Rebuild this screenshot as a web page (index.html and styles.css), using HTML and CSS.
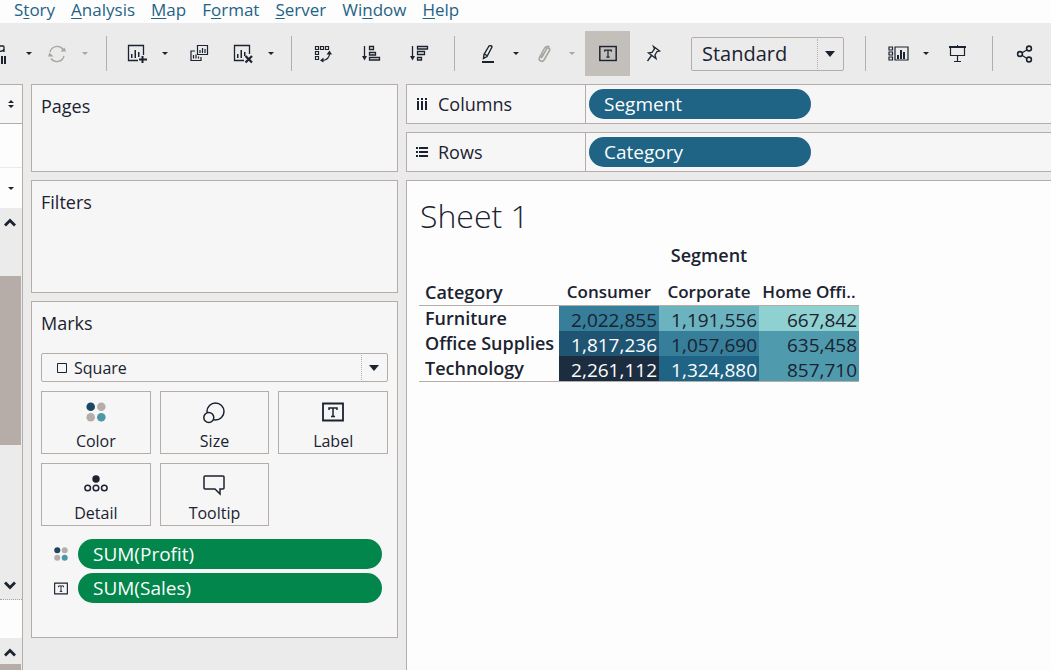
FILE: index.html
```html
<!DOCTYPE html>
<html lang="en">
<head>
<meta charset="utf-8">
<title>Sheet 1</title>
<link rel="stylesheet" href="styles.css">
</head>
<body>
<svg class="defs" aria-hidden="true">
  <symbol id="caret" viewBox="0 0 6 3"><path d="M0 0h6L3 3z" fill="currentColor"/></symbol>
  <symbol id="textbox" viewBox="0 0 22 20"><path d="M1 1.500h20v17H1z" fill="none" stroke="currentColor" stroke-width="1.800"/><path d="M7 8V6h8v2M11 6v9M9 14.500h4" fill="none" stroke="currentColor" stroke-width="1.500"/></symbol>
  <symbol id="dots" viewBox="0 0 20 20"><circle cx="4.700" cy="4.700" r="4.300" fill="#1c4763"/><circle cx="15.300" cy="4.700" r="4.300" fill="#b6ada8"/><circle cx="4.700" cy="15.300" r="4.300" fill="#b6ada8"/><circle cx="15.300" cy="15.300" r="4.300" fill="#4c98ab"/></symbol>
</svg>

<nav class="menu">
  <a href="#">S<u>t</u>ory</a><a href="#"><u>A</u>nalysis</a><a href="#"><u>M</u>ap</a><a href="#">F<u>o</u>rmat</a><a href="#"><u>S</u>erver</a><a href="#">Wi<u>n</u>dow</a><a href="#"><u>H</u>elp</a>
</nav>

<div class="toolbar" role="toolbar">
  <div class="group group-data">
    <button class="tool tool-cut" aria-label="Pause updates"><svg width="20" height="24" viewBox="0 0 20 24"><path d="M0 4h3q1 0 1 1v5M0 9q3 1 4-2" fill="none" stroke="currentColor" stroke-width="1.300"/><path d="M1 14h2v8H1zM4 14h2v8H4z" fill="currentColor"/></svg></button>
    <button class="drop" aria-label="Pause options"><svg width="6" height="3"><use href="#caret"/></svg></button>
    <button class="tool off" aria-label="Refresh"><svg width="20" height="20" viewBox="0 0 20 20"><path d="M3 8a7.300 7.300 0 0 1 13-2.500M17 12a7.300 7.300 0 0 1-13 2.500" fill="none" stroke="currentColor" stroke-width="1.300"/><path d="M13.500 7.500h5.500l-1.500-4zM6.500 12.500H1l1.500-4z" fill="currentColor"/></svg></button>
    <button class="drop off" aria-label="Refresh options"><svg width="6" height="3"><use href="#caret"/></svg></button>
  </div>
  <div class="group group-new">
    <div class="split">
      <button class="tool" aria-label="New worksheet"><svg width="20" height="20" viewBox="0 0 20 20"><path d="M16.500 11V1.500H1.500v15H11" fill="none" stroke="currentColor" stroke-width="1.300"/><path d="M4 10h1.500v4H4zM7.500 6H9v8H7.500zM11 8h1.500v5H11zM14.500 12h2v2.500H20v2h-3.500V19h-2v-2.500H12v-2h2.500z" fill="currentColor"/></svg></button>
      <button class="drop" aria-label="New options"><svg width="6" height="3"><use href="#caret"/></svg></button>
    </div>
    <button class="tool" aria-label="Duplicate"><svg width="20" height="20" viewBox="0 0 20 20"><path d="M8.500 1.500h10v9h-10zM6 7H2v9.500h10V13" fill="none" stroke="currentColor" stroke-width="1.200"/><path d="M11 6v3M13.500 4v5M16 5v4M4.500 11v3.500M7 10.500v4M9.500 12.500v2" stroke="currentColor" stroke-width="1.200"/></svg></button>
    <div class="split">
      <button class="tool" aria-label="Clear sheet"><svg width="20" height="20" viewBox="0 0 20 20"><path d="M16.500 10V1.500H1.500v15H11" fill="none" stroke="currentColor" stroke-width="1.300"/><path d="M4 10h1.500v4H4zM7.500 6H9v8H7.500zM11 8h1.500v4H11z" fill="currentColor"/><path d="M12.500 12l6.500 6.500m0-6.500l-6.500 6.500" stroke="currentColor" stroke-width="2.200"/></svg></button>
      <button class="drop" aria-label="Clear options"><svg width="6" height="3"><use href="#caret"/></svg></button>
    </div>
  </div>
  <div class="group group-sort">
    <button class="tool" aria-label="Swap rows and columns"><svg width="20" height="20" viewBox="0 0 20 20"><path d="M2.500 2.500h3v3h-3zM7.500 2.500h3v3h-3zM12.500 2.500h3v3h-3zM2.500 7.500h3v3h-3zM2.500 12.500h3v3h-3zM16.500 9.500q0 6-7 7" fill="none" stroke="currentColor" stroke-width="1.200"/><path d="M13.500 10.500h5.500l-2.500-4zM10.500 13.500v5L7 16.500z" fill="currentColor"/></svg></button>
    <button class="tool" aria-label="Sort ascending"><svg width="20" height="20" viewBox="0 0 20 20"><path d="M3.500 2v11M8.500 2.500h4v3h-4zM8.500 8.500h6v2.500h-6zM8.500 13.500h10v2.500h-10z" fill="none" stroke="currentColor" stroke-width="1.300"/><path d="M1 12h5l-2.500 4.500z" fill="currentColor"/></svg></button>
    <button class="tool" aria-label="Sort descending"><svg width="20" height="20" viewBox="0 0 20 20"><path d="M3.500 2v11M8.500 2.500h10v2.500h-10zM8.500 7.500h7v3h-7zM8.500 13.500h4v2.500h-4z" fill="none" stroke="currentColor" stroke-width="1.300"/><path d="M1 12h5l-2.500 4.500z" fill="currentColor"/></svg></button>
  </div>
  <div class="group group-view">
    <div class="split">
      <button class="tool" aria-label="Highlight"><svg width="20" height="20" viewBox="0 0 20 20"><path d="M11 2q2.500-1 3 1L9 12.500l-3.500 2L6 10.500zM6.500 10l3 2" fill="none" stroke="currentColor" stroke-width="1.400"/><path d="M4 17h12v2H4z" fill="currentColor"/></svg></button>
      <button class="drop" aria-label="Highlight options"><svg width="6" height="3"><use href="#caret"/></svg></button>
      <button class="tool off" aria-label="Group"><svg width="20" height="20" viewBox="0 0 20 20"><path d="M8 13l4.500-8c1-2 4-.5 3 1.500l-5.500 9.500c-1.500 2.500-6 1-4.500-2.500L10 5c1-2 3.500-3.500 5.500-2M10 9l-3 5" fill="none" stroke="currentColor" stroke-width="1.600"/></svg></button>
      <button class="drop off" aria-label="Group options"><svg width="6" height="3"><use href="#caret"/></svg></button>
    </div>
    <button class="tool active" aria-label="Show mark labels" aria-pressed="true"><svg width="18" height="17" viewBox="0 0 22 20"><use href="#textbox"/></svg></button>
    <button class="tool" aria-label="Pin"><svg width="20" height="20" viewBox="0 0 20 20"><path d="M10.500 2.500l6 4.500-2.500.5-2 3.500 1 3.500-7.500-5.500 3.500-.5 2.500-3.500zM8.500 11.500L4.500 17" fill="none" stroke="currentColor" stroke-width="1.300"/></svg></button>
    <div class="pick pick-fit">
      <select aria-label="Fit"><option>Standard</option></select>
      <svg class="pick-arrow" width="10" height="6" viewBox="0 0 10 6"><path d="M0 0h10L5 6z" fill="currentColor"/></svg>
    </div>
  </div>
  <div class="group group-show">
    <div class="split">
      <button class="tool" aria-label="Show cards"><svg width="21" height="18" viewBox="0 0 21 18"><path d="M7 2h13v13H7zM1 2h3.500v3H1zM1 7h3.500v3H1zM1 12h3.500v3H1z" fill="none" stroke="currentColor" stroke-width="1.200"/><path d="M9 10h2v4H9zM12 5h2v9h-2zM15 7h2v7h-2z" fill="currentColor"/></svg></button>
      <button class="drop" aria-label="Card options"><svg width="6" height="3"><use href="#caret"/></svg></button>
    </div>
    <button class="tool" aria-label="Presentation mode"><svg width="20" height="20" viewBox="0 0 20 20"><path d="M2 2h17v2H2zM10 1h1v2h-1z" fill="currentColor"/><path d="M3.500 4v7.500h14V4M10.500 11.500V17M7 17.500h7" fill="none" stroke="currentColor" stroke-width="1.200"/></svg></button>
  </div>
  <div class="group">
    <button class="tool" aria-label="Share"><svg width="20" height="20" viewBox="0 0 20 20"><path d="M5 10l8.500-5M5 10l8.500 5.500" stroke="currentColor" stroke-width="1.300"/><g fill="#ebebeb" stroke="currentColor" stroke-width="1.600"><circle cx="5" cy="10" r="2.400"/><circle cx="14" cy="4.500" r="2.400"/><circle cx="14" cy="15.500" r="2.400"/></g></svg></button>
  </div>
</div>

<div class="workspace">
  <aside class="datapane">
    <div class="pane-tab"><svg width="6" height="8" viewBox="0 0 6 8"><path d="M0 3L3 0l3 3zM0 5l3 3 3-3z" fill="currentColor"/></svg></div>
    <div class="pane-blank"></div>
    <div class="pane-search"><svg width="6" height="3"><use href="#caret"/></svg></div>
    <div class="scroll scroll-fields">
      <svg class="chev" width="12" height="9" viewBox="0 0 12 9"><path d="M1 7.500l5-5 5 5" fill="none" stroke="currentColor" stroke-width="2.800"/></svg>
      <div class="thumb"></div>
      <svg class="chev" width="12" height="9" viewBox="0 0 12 9"><path d="M1 1.500l5 5 5-5" fill="none" stroke="currentColor" stroke-width="2.800"/></svg>
    </div>
    <div class="pane-params"></div>
    <div class="scroll scroll-params">
      <svg class="chev" width="12" height="9" viewBox="0 0 12 9"><path d="M1 7.500l5-5 5 5" fill="none" stroke="currentColor" stroke-width="2.800"/></svg>
      <div class="thumb"></div>
    </div>
  </aside>

  <div class="cards">
    <section class="card card-pages"><h2>Pages</h2></section>
    <section class="card card-filters"><h2>Filters</h2></section>
    <section class="card card-marks">
      <h2>Marks</h2>
      <div class="pick pick-mark">
        <svg class="pick-icon" width="10" height="10" viewBox="0 0 10 10"><path d="M.5.5h9v9h-9z" fill="none" stroke="currentColor"/></svg>
        <select aria-label="Mark type"><option>Square</option></select>
        <svg class="pick-arrow" width="10" height="6" viewBox="0 0 10 6"><path d="M0 0h10L5 6z" fill="currentColor"/></svg>
      </div>
      <div class="mark-grid">
        <button><svg width="20" height="20"><use href="#dots"/></svg>Color</button>
        <button><svg width="22" height="22" viewBox="0 0 22 22"><g fill="#f6f6f6" stroke="currentColor" stroke-width="1.500"><circle cx="12.500" cy="9.500" r="8.500"/><circle cx="5.800" cy="15.500" r="5"/></g></svg>Size</button>
        <button><svg width="22" height="20"><use href="#textbox"/></svg>Label</button>
        <button><svg width="24" height="20" viewBox="0 0 24 20"><circle cx="12" cy="5" r="3.700" fill="currentColor"/><g fill="none" stroke="currentColor" stroke-width="1.500"><circle cx="3.700" cy="14" r="2.800"/><circle cx="12" cy="14" r="2.800"/><circle cx="20.300" cy="14" r="2.800"/></g></svg>Detail</button>
        <button><svg width="22" height="22" viewBox="0 0 22 22"><path d="M2 2h18q1 0 1 1v11q0 1-1 1h-3v5l-5-5H2q-1 0-1-1V3q0-1 1-1z" fill="none" stroke="currentColor" stroke-width="1.500"/></svg>Tooltip</button>
      </div>
      <div class="mark-pills">
        <svg width="14" height="14"><use href="#dots"/></svg><button class="pill measure">SUM(Profit)</button>
        <svg width="14" height="13"><use href="#textbox"/></svg><button class="pill measure">SUM(Sales)</button>
      </div>
    </section>
  </div>

  <main class="view">
    <div class="shelf">
      <h2><svg width="12" height="12" viewBox="0 0 12 12"><path d="M1 0h2v2H1zM5 0h2v2H5zM9 0h2v2H9zM1 3h2v9H1zM5 3h2v9H5zM9 3h2v9H9z" fill="currentColor"/></svg>Columns</h2>
      <button class="pill dimension">Segment</button>
    </div>
    <div class="shelf">
      <h2><svg width="12" height="12" viewBox="0 0 12 12"><path d="M0 1h2v2H0zM0 5h2v2H0zM0 9h2v2H0zM3 1h9v2H3zM3 5h9v2H3zM3 9h9v2H3z" fill="currentColor"/></svg>Rows</h2>
      <button class="pill dimension">Category</button>
    </div>
    <section class="sheet">
      <h1>Sheet 1</h1>
      <table class="crosstab">
        <colgroup><col class="col-head"><col class="col-val"><col class="col-val"><col class="col-val"></colgroup>
        <thead>
          <tr class="field-row"><td></td><th colspan="3" scope="colgroup">Segment</th></tr>
          <tr class="head-row"><th scope="col">Category</th><th class="member" scope="col">Consumer</th><th class="member" scope="col">Corporate</th><th class="member" scope="col">Home Offi..</th></tr>
        </thead>
        <tbody>
          <tr><th scope="row">Furniture</th><td class="c4">2,022,855</td><td class="c2">1,191,556</td><td class="c1">667,842</td></tr>
          <tr><th scope="row">Office Supplies</th><td class="c6 light">1,817,236</td><td class="c4">1,057,690</td><td class="c3">635,458</td></tr>
          <tr><th scope="row">Technology</th><td class="c7 light">2,261,112</td><td class="c5 light">1,324,880</td><td class="c3">857,710</td></tr>
        </tbody>
      </table>
    </section>
  </main>
</div>
</body>
</html>
```

FILE: styles.css
```css
* { box-sizing: border-box; }

body {
  margin: 0;
  height: 100vh;
  display: flex;
  flex-direction: column;
  overflow: hidden;
  background: #ebebeb;
  color: #1b2230;
  font-family: "Open Sans", "Noto Sans", sans-serif;
  font-size: 18px;
}

h1, h2 { margin: 0; font-weight: 400; }
button, select { font: inherit; color: inherit; }
button { border: 0; padding: 0; background: none; }
svg { display: block; flex: none; }
.defs { position: absolute; width: 0; height: 0; }

/* menu bar */
.menu {
  flex: none;
  display: flex;
  gap: 16px;
  height: 23px;
  padding-left: 14px;
  background: #fdfdfd;
  font-size: 17px;
  line-height: 20px;
}
.menu a { color: #1f6385; text-decoration: none; }
.menu u { text-underline-offset: 2px; text-decoration-thickness: 1px; }

/* toolbar */
.toolbar {
  flex: none;
  display: flex;
  align-items: center;
  height: 61px;
}
.group {
  flex: none;
  display: flex;
  align-items: center;
  gap: 6px;
  padding: 0 10px 0 13px;
}
.group + .group {
  border-left: 1px solid #b6ada8;
  min-height: 35px;
}
.group-data { gap: 0; padding: 0 12px 0 0; }
.group-new { padding: 0 11px; }
.group-sort { gap: 10px; padding: 0 16px 0 12px; }
.group-view { gap: 4px; padding: 0 21px 0 14px; }
.group-show { gap: 3px; padding: 0 16px 0 13px; }
.split { display: flex; align-items: center; }
.tool {
  display: flex;
  align-items: center;
  justify-content: center;
  width: 38px;
  height: 35px;
}
.tool-cut { width: 20px; }
.drop {
  display: flex;
  align-items: center;
  justify-content: center;
  width: 18px;
  height: 35px;
}
.off { color: #a9a5a1; }
.active {
  width: 45px;
  height: 45px;
  margin: -5px 0;
  background: #c3bfbb;
}

.pick { position: relative; display: flex; align-items: center; border: 1px solid #b6ada8; border-radius: 2px; }
.pick select {
  flex: 1;
  height: 100%;
  border: 0;
  padding: 0 0 0 10px;
  background: none;
  appearance: none;
}
.pick::after {
  content: "";
  position: absolute;
  right: 25px;
  top: 1px;
  bottom: 1px;
  border-left: 1px dotted #b6ada8;
}
.pick-arrow { position: absolute; right: 8px; pointer-events: none; }
.pick-fit { width: 153px; height: 34px; margin-left: 15px; font-size: 20px; }

/* workspace */
.workspace { flex: 1; min-height: 0; display: flex; gap: 8px; }

.datapane {
  flex: none;
  display: flex;
  flex-direction: column;
  width: 23px;
  border-right: 1px solid #b6ada8;
  border-top: 1px solid #b6ada8;
}
.pane-tab, .pane-search { display: flex; align-items: center; justify-content: flex-end; padding-right: 8px; }
.pane-tab { height: 39px; background: #f6f6f6; border-bottom: 1px solid #b6ada8; }
.pane-blank { height: 44px; background: #fdfdfd; border-bottom: 1px solid #ebebeb; }
.pane-search { height: 40px; background: #fdfdfd; }
.scroll { display: flex; flex-direction: column; align-items: flex-start; }
.scroll .chev { margin-left: 4px; }
.scroll .thumb { width: 21px; background: #b6ada8; }
.scroll-fields { flex: 1; padding: 10px 0 9px; border-bottom: 1px dotted #a8a4a0; }
.scroll-fields .thumb { height: 169px; margin: 49px 0 auto; }
.pane-params { height: 38px; background: #fdfdfd; }
.scroll-params { height: 32px; padding-top: 10px; }
.scroll-params .thumb { flex: 1; margin-top: 7px; }

.cards { flex: none; display: flex; flex-direction: column; gap: 8px; width: 367px; }
.card { padding: 9px 9px; border: 1px solid #b6ada8; background: #f6f6f6; }
.card h2 { font-size: 18px; line-height: 24px; }
.card-pages { height: 88px; }
.card-filters { height: 113px; }
.card-marks { padding-bottom: 34px; }

.pick-mark { height: 29px; margin: 18px 0 9px; font-size: 16px; }
.pick-mark .pick-icon { margin-left: 15px; }
.pick-mark select { padding-left: 7px; }

.mark-grid { display: grid; grid-template-columns: repeat(3, 1fr); gap: 9px; }
.mark-grid button {
  display: flex;
  flex-direction: column;
  align-items: center;
  justify-content: space-between;
  height: 63px;
  padding: 10px 0 2px;
  border: 1px solid #b6ada8;
  font-size: 16px;
  line-height: 20px;
}

.mark-pills {
  display: grid;
  grid-template-columns: 14px 1fr;
  align-items: center;
  gap: 4px 10px;
  padding: 13px 6px 0 13px;
}

.pill {
  height: 30px;
  padding: 0 15px;
  border-radius: 15px;
  color: #fdfdfd;
  font-size: 19px;
  line-height: 30px;
  text-align: left;
}
.measure { background: #02864b; }
.dimension { background: #1f6385; width: 222px; }

.view { flex: 1; min-width: 0; display: flex; flex-direction: column; gap: 8px; }
.shelf {
  flex: none;
  display: flex;
  align-items: center;
  gap: 3px;
  height: 40px;
  border: 1px solid #b6ada8;
  border-right: 0;
  background: #f6f6f6;
}
.shelf h2 {
  display: flex;
  align-items: center;
  gap: 10px;
  width: 179px;
  height: 100%;
  padding-left: 9px;
  border-right: 1px solid #b6ada8;
  font-size: 18px;
}

.sheet {
  flex: 1;
  padding: 13px 12px;
  border: 1px solid #b6ada8;
  border-width: 1px 0 0 1px;
  background: #fdfdfd;
}
.sheet h1 { padding-left: 1px; font-size: 32px; font-weight: 300; line-height: 44px; }

.crosstab {
  width: 440px;
  table-layout: fixed;
  border-collapse: collapse;
  border-bottom: 1px solid #b6ada8;
  font-size: 18px;
}
.crosstab th { padding: 0; font-weight: 600; white-space: nowrap; }
.crosstab .member { font-size: 17px; }
.crosstab td { padding: 0; }
.col-head { width: 140px; }
.col-val { width: 100px; }
.field-row th { height: 34px; line-height: 34px; }
.crosstab .head-row th { height: 33px; padding-top: 8px; line-height: 24px; border-bottom: 1px solid #b6ada8; }
.crosstab th:first-child { padding-left: 6px; text-align: left; }
tbody th, tbody td { height: 25px; line-height: 25px; }
.crosstab tbody td { padding: 4px 2px 0 0; text-align: right; font-size: 19px; line-height: 21px; }
.c1 { background: #8fd0d0; }
.c2 { background: #6bb3bf; }
.c3 { background: #4f9bad; }
.c4 { background: #367e99; }
.c5 { background: #1f6385; }
.c6 { background: #1f5473; }
.c7 { background: #1d2d40; }
.light { color: #fdfdfd; }
```
